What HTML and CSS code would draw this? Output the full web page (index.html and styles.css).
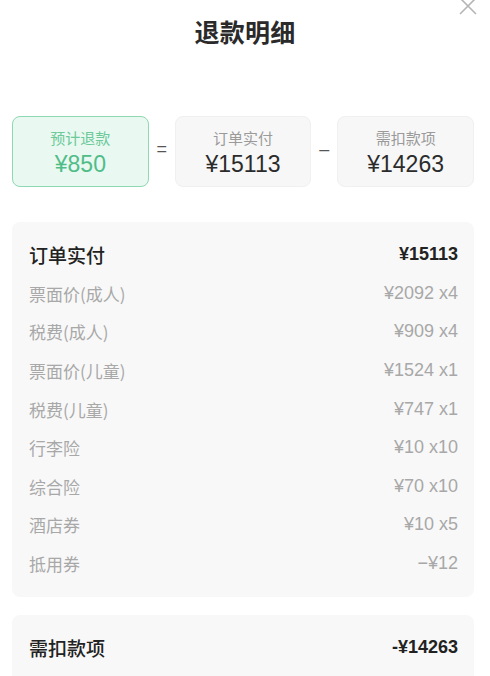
FILE: index.html
```html
<!DOCTYPE html>
<html lang="zh-CN">
<head>
<meta charset="utf-8">
<link rel="stylesheet" href="styles.css">
</head>
<body>
<div class="sheet">
  <header class="head">
    <h1 class="title">退款明细</h1>
    <svg class="close" width="20" height="20" viewBox="0 0 20 20"><path d="M2 -2 L18 14 M18 -2 L2 14" stroke="#b5b5b5" stroke-width="1.6" fill="none"/></svg>
  </header>

  <section class="summary">
    <div class="sum-card green">
      <div class="sum-label">预计退款</div>
      <div class="sum-value">¥850</div>
    </div>
    <div class="op">=</div>
    <div class="sum-card">
      <div class="sum-label">订单实付</div>
      <div class="sum-value">¥15113</div>
    </div>
    <div class="op">–</div>
    <div class="sum-card">
      <div class="sum-label">需扣款项</div>
      <div class="sum-value">¥14263</div>
    </div>
  </section>

  <section class="detail">
    <div class="row main"><span>订单实付</span><span>¥15113</span></div>
    <div class="row"><span>票面价(成人)</span><span>¥2092 x4</span></div>
    <div class="row"><span>税费(成人)</span><span>¥909 x4</span></div>
    <div class="row"><span>票面价(儿童)</span><span>¥1524 x1</span></div>
    <div class="row"><span>税费(儿童)</span><span>¥747 x1</span></div>
    <div class="row"><span>行李险</span><span>¥10 x10</span></div>
    <div class="row"><span>综合险</span><span>¥70 x10</span></div>
    <div class="row"><span>酒店券</span><span>¥10 x5</span></div>
    <div class="row"><span>抵用券</span><span>−¥12</span></div>
  </section>

  <section class="detail second">
    <div class="row main"><span>需扣款项</span><span>-¥14263</span></div>
  </section>
</div>
</body>
</html>
```

FILE: styles.css
```css
html, body {
  margin: 0;
  padding: 0;
  background: #ffffff;
}
body {
  font-family: "Liberation Sans", "Noto Sans CJK SC", sans-serif;
  color: #222;
  overflow: hidden;
}
.sheet {
  width: 490px;
  height: 676px;
  overflow: hidden;
}
.head {
  position: relative;
  height: 116px;
  display: flex;
  justify-content: center;
}
.title {
  margin: 16px 0 0 0;
  font-family: "Noto Sans CJK SC", sans-serif;
  font-size: 25px;
  font-weight: 700;
  line-height: 30px;
  color: #2a2a2a;
  letter-spacing: 0.3px;
}
.close {
  position: absolute;
  right: 12px;
  top: 0;
}
.summary {
  display: flex;
  align-items: center;
  padding: 0 16px 0 12px;
}
.sum-card {
  width: 137px;
  height: 71px;
  box-sizing: border-box;
  border-radius: 8px;
  background: #f7f7f7;
  border: 1px solid #f0f0f0;
  display: flex;
  flex-direction: column;
  align-items: center;
  padding-top: 11px;
}
.sum-card.green {
  background: #e9f8f0;
  border-color: #8ed8b4;
}
.sum-label {
  font-family: "Noto Sans CJK SC", sans-serif;
  font-size: 15px;
  line-height: 20px;
  color: #9a9a9a;
}
.sum-value {
  font-size: 23px;
  line-height: 28px;
  margin-top: 2px;
  color: #2b2b2b;
}
.green .sum-label {
  color: #6cc99a;
}
.green .sum-value {
  color: #50bd88;
}
.op {
  width: 26px;
  text-align: center;
  font-size: 18px;
  color: #555;
  margin-top: -4px;
}
.detail {
  margin: 35px 16px 0 12px;
  background: #f8f8f8;
  border-radius: 8px;
  padding: 13px 16px 14px 17px;
}
.detail.second {
  margin-top: 18px;
  padding-bottom: 40px;
}
.row {
  display: flex;
  justify-content: space-between;
  align-items: center;
  height: 38.6px;
  font-size: 18px;
  color: #a8a8a8;
}
.row span:first-child {
  font-family: "Noto Sans CJK SC", sans-serif;
  font-size: 17px;
}
.row.main {
  height: 39px;
  font-size: 18px;
  font-weight: 700;
  color: #222;
}
.row.main span:first-child {
  font-size: 19px;
  font-weight: 500;
}
```
